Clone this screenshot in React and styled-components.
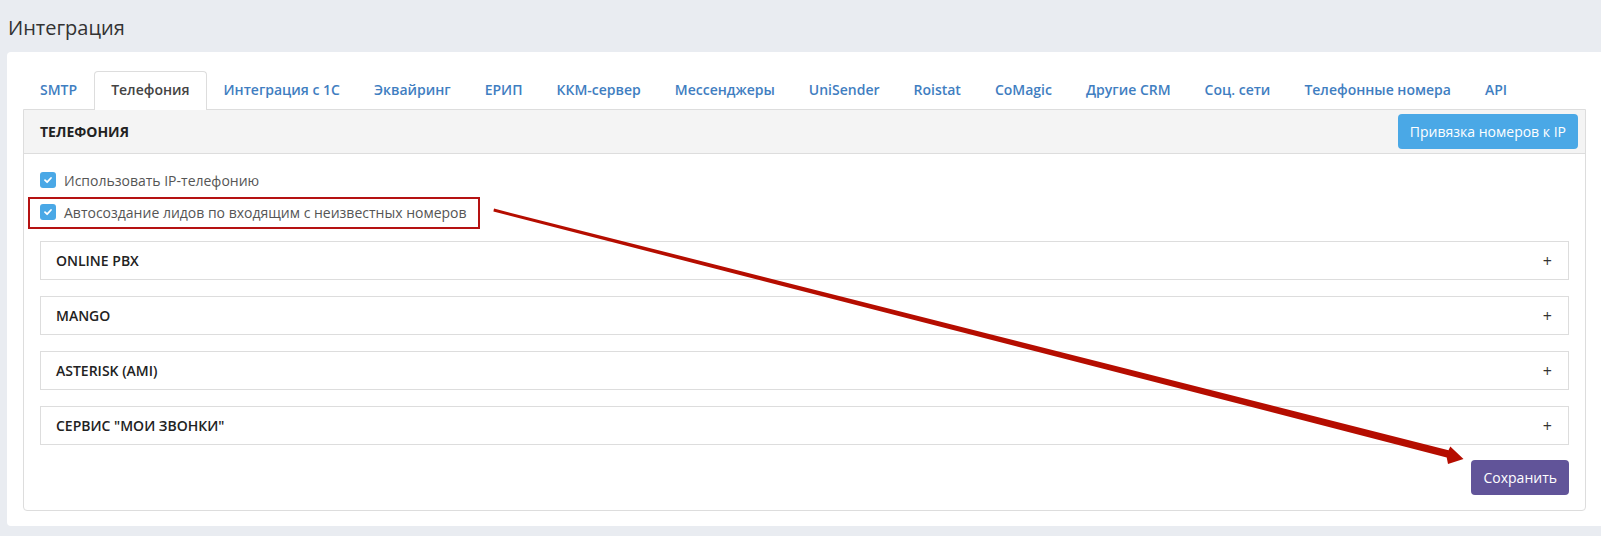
import styled, { createGlobalStyle } from "styled-components";

const GlobalStyle = createGlobalStyle`
  html, body {
    margin: 0;
    padding: 0;
    background: #e9ecf1;
    font-family: "Open Sans", "Liberation Sans", sans-serif;
    color: #333;
  }
  * {
    box-sizing: border-box;
  }
`;

const Page = styled.div`
  position: relative;
  width: 1601px;
  height: 536px;
  padding: 14px 0 0 7px;
  overflow: hidden;
`;

const Title = styled.h1`
  margin: 0 0 11px 1px;
  font-size: 20px;
  font-weight: 400;
  line-height: 27px;
  color: #333;
`;

const Card = styled.div`
  background: #fff;
  border-radius: 4px 0 0 4px;
  padding: 19px 15px 15px 16px;
`;

const Tabs = styled.ul`
  display: flex;
  list-style: none;
  margin: 0;
  padding: 0;
  height: 38px;
`;

const Tab = styled.li`
  padding: 0 16px;
  font-size: 14px;
  font-weight: 600;
  line-height: 36px;
  border: 1px solid ${({ $active }) => ($active ? "#ddd" : "transparent")};
  border-bottom: none;
  border-radius: 4px 4px 0 0;
  background: #fff;
  color: ${({ $active }) => ($active ? "#444" : "#3f7ec1")};
  position: relative;
  z-index: ${({ $active }) => ($active ? 2 : 1)};
  height: ${({ $active }) => ($active ? "39px" : "38px")};
`;

const Panel = styled.div`
  border: 1px solid #ddd;
  border-radius: 0 0 4px 4px;
`;

const PanelHeader = styled.div`
  display: flex;
  align-items: center;
  justify-content: space-between;
  height: 44px;
  padding: 0 7px 0 16px;
  background: #f4f4f4;
  border-bottom: 1px solid #ddd;
`;

const PanelTitle = styled.div`
  font-size: 14px;
  font-weight: 700;
  color: #222;
  text-transform: uppercase;
`;

const Button = styled.button`
  height: 35px;
  padding: 0 12px;
  border: none;
  border-radius: 4px;
  font-family: inherit;
  font-size: 14px;
  color: #fff;
  background: ${({ $tone }) => ($tone === "save" ? "#615499" : "#4aa8e6")};
`;

const PanelBody = styled.div`
  padding: 16px 16px 15px 16px;
`;

const CheckRow = styled.label`
  display: flex;
  align-items: center;
  gap: 8px;
  height: 20px;
  font-size: 14px;
  color: #555;
`;

const Highlight = styled.div`
  display: inline-flex;
  margin: 7px 0 0 -12px;
  padding: 3px 11px 5px 10px;
  border: 2px solid #b51212;
`;

const Box = styled.span`
  display: inline-flex;
  align-items: center;
  justify-content: center;
  width: 16px;
  height: 16px;
  border-radius: 3px;
  background: #4aa8e6;
`;

const Sections = styled.div`
  display: flex;
  flex-direction: column;
  gap: 16px;
  margin-top: 12px;
`;

const Section = styled.div`
  display: flex;
  align-items: center;
  justify-content: space-between;
  height: 39px;
  padding: 0 16px 0 15px;
  border: 1px solid #ddd;
  font-size: 14px;
  font-weight: 600;
  color: #222;
`;

const Plus = styled.span`
  font-size: 16px;
  font-weight: 400;
  color: #333;
`;

const Footer = styled.div`
  display: flex;
  justify-content: flex-end;
  margin-top: 15px;
`;

const Overlay = styled.svg`
  position: absolute;
  inset: 0;
  pointer-events: none;
`;

const tabs = [
  "SMTP",
  "Телефония",
  "Интеграция с 1С",
  "Эквайринг",
  "ЕРИП",
  "ККМ-сервер",
  "Мессенджеры",
  "UniSender",
  "Roistat",
  "CoMagic",
  "Другие CRM",
  "Соц. сети",
  "Телефонные номера",
  "API",
];

const sections = ["ONLINE PBX", "MANGO", "ASTERISK (AMI)", 'СЕРВИС "МОИ ЗВОНКИ"'];

const Check = () => (
  <Box>
    <svg width="10" height="10" viewBox="0 0 10 10">
      <path d="M2 5.2 L4.1 7.2 L8 3" fill="none" stroke="#fff" strokeWidth="1.8" strokeLinecap="round" strokeLinejoin="round" />
    </svg>
  </Box>
);

const App = () => {
  return (
    <Page>
      <GlobalStyle />
      <Title>Интеграция</Title>
      <Card>
        <Tabs>
          {tabs.map((t) => (
            <Tab key={t} $active={t === "Телефония"}>
              {t}
            </Tab>
          ))}
        </Tabs>
        <Panel>
          <PanelHeader>
            <PanelTitle>Телефония</PanelTitle>
            <Button>Привязка номеров к IP</Button>
          </PanelHeader>
          <PanelBody>
            <CheckRow>
              <Check />
              Использовать IP-телефонию
            </CheckRow>
            <Highlight>
              <CheckRow>
                <Check />
                Автосоздание лидов по входящим с неизвестных номеров
              </CheckRow>
            </Highlight>
            <Sections>
              {sections.map((s) => (
                <Section key={s}>
                  {s}
                  <Plus>+</Plus>
                </Section>
              ))}
            </Sections>
            <Footer>
              <Button $tone="save">Сохранить</Button>
            </Footer>
          </PanelBody>
        </Panel>
      </Card>
      <Overlay width="1601" height="536" viewBox="0 0 1601 536">
        <polygon
          points="494,208.6 1448.5,450.3 1450.3,446.5 1463.5,459 1448,464 1446.7,457.4 493.4,211.4"
          fill="#b50d00"
        />
      </Overlay>
    </Page>
  );
};

export default App;
